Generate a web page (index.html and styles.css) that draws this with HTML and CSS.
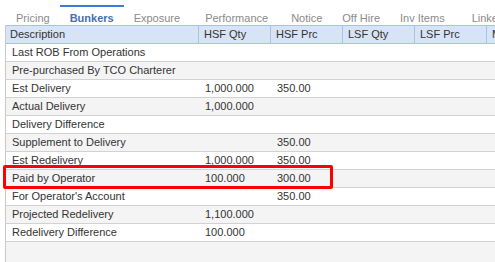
FILE: index.html
```html
<!DOCTYPE html>
<html lang="en">
<head>
    <meta charset="UTF-8">
    <title>Bunkers</title>
    <link rel="stylesheet" href="styles.css">
</head>
<body>
    <div class="tabs">
        <div class="tab">Pricing</div>
        <div class="tab active">Bunkers</div>
        <div class="tab">Exposure</div>
        <div class="tab">Performance</div>
        <div class="tab">Notice</div>
        <div class="tab">Off Hire</div>
        <div class="tab">Inv Items</div>
        <div class="tab">Linked</div>
    </div>

    <div class="grid">
        <div class="row head">
            <div class="cell">Description</div>
            <div class="cell">HSF Qty</div>
            <div class="cell">HSF Prc</div>
            <div class="cell">LSF Qty</div>
            <div class="cell">LSF Prc</div>
            <div class="cell">MGO Qty</div>
        </div>
        <div class="row"><div class="cell">Last ROB From Operations</div><div class="cell"></div><div class="cell"></div></div>
        <div class="row alt"><div class="cell">Pre-purchased By TCO Charterer</div><div class="cell"></div><div class="cell"></div></div>
        <div class="row"><div class="cell">Est Delivery</div><div class="cell">1,000.000</div><div class="cell">350.00</div></div>
        <div class="row alt"><div class="cell">Actual Delivery</div><div class="cell">1,000.000</div><div class="cell"></div></div>
        <div class="row"><div class="cell">Delivery Difference</div><div class="cell"></div><div class="cell"></div></div>
        <div class="row alt"><div class="cell">Supplement to Delivery</div><div class="cell"></div><div class="cell">350.00</div></div>
        <div class="row"><div class="cell">Est Redelivery</div><div class="cell">1,000.000</div><div class="cell">350.00</div></div>
        <div class="row alt"><div class="cell">Paid by Operator</div><div class="cell">100.000</div><div class="cell">300.00</div></div>
        <div class="row"><div class="cell">For Operator's Account</div><div class="cell"></div><div class="cell">350.00</div></div>
        <div class="row alt"><div class="cell">Projected Redelivery</div><div class="cell">1,100.000</div><div class="cell"></div></div>
        <div class="row"><div class="cell">Redelivery Difference</div><div class="cell">100.000</div><div class="cell"></div></div>
    </div>

    <div class="highlight"></div>
</body>
</html>
```

FILE: styles.css
```css
body {
    margin: 0;
    width: 495px;
    height: 262px;
    overflow: hidden;
    position: relative;
    background: white;
    font-family: 'Liberation Sans', Arial, sans-serif;
    font-size: 11px;
    color: #333;
}
.tabs {
    display: flex;
    padding-left: 6px;
    height: 25px;
    white-space: nowrap;
}
.tab {
    margin-top: 5px;
    border-top: 2px solid transparent;
    padding: 5px 10px 0;
    line-height: 13px;
    color: #8a8a8a;
}
/* the app spaces some tabs a bit wider */
.tab:nth-child(4) { margin-left: 5px; }
.tab:nth-child(5) { margin-left: 3px; }
.tab:nth-child(8) { margin-left: 7px; }
.tab.active {
    border-top-color: #3b7dd8;
    color: #4a6fb0;
    font-weight: bold;
}
.grid {
    margin-left: 5px;
    border-left: 1px solid #c9c9c9;
    width: 600px;
    height: 237px;
    background: #f4f4f4;
}
.row {
    display: grid;
    grid-template-columns: 193px 72px 72px 72px 72px 72px;
    height: 17px;
    line-height: 17px;
    border-bottom: 1px solid #d2d2d2;
    background: white;
}
.row.alt { background: #f4f4f4; }
.cell {
    padding: 0 6px;
    white-space: nowrap;
    overflow: hidden;
}
.row.head {
    background: #d6e4f6;
    border-top: 1px solid #a9c3e6;
    border-bottom: 1px solid #a9c3e6;
}
.row.head .cell {
    border-right: 1px solid #a9c3e6;
    padding: 0 5px;
}
.row.head .cell:first-child { padding-left: 4px; }
.highlight {
    position: absolute;
    left: 3px;
    top: 165px;
    width: 324px;
    height: 18px;
    border: 3px solid #f00;
    border-radius: 2px;
}
```
